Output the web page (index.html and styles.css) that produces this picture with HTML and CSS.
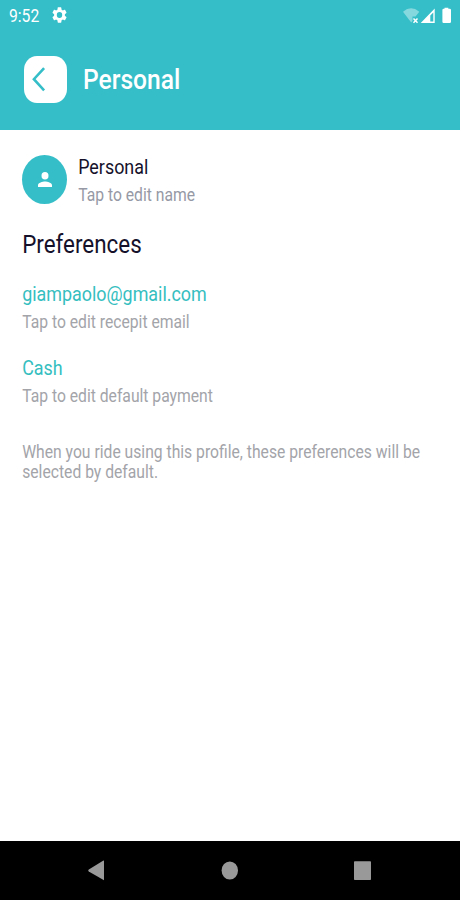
FILE: index.html
```html
<!DOCTYPE html>
<html lang="en">
<head>
<meta charset="utf-8">
<title>Personal</title>
<link rel="stylesheet" href="styles.css">
</head>
<body>
<div class="screen">
  <div class="status">
    <span class="time text">9:52</span>
    <svg class="gear" viewBox="2 2 20 20" preserveAspectRatio="none"><path fill="#fff" d="M19.14 12.94c.04-.3.06-.61.06-.94 0-.32-.02-.64-.07-.94l2.03-1.58a.49.49 0 0 0 .12-.61l-1.92-3.32a.49.49 0 0 0-.59-.22l-2.39.96c-.5-.38-1.03-.7-1.62-.94l-.36-2.54a.48.48 0 0 0-.48-.41h-3.84c-.24 0-.43.17-.47.41l-.36 2.54c-.59.24-1.13.57-1.62.94l-2.39-.96a.48.48 0 0 0-.59.22L2.74 8.87a.48.48 0 0 0 .12.61l2.03 1.58c-.05.3-.09.63-.09.94s.02.64.07.94l-2.03 1.58a.49.49 0 0 0-.12.61l1.92 3.32c.12.22.37.29.59.22l2.39-.96c.5.38 1.03.7 1.62.94l.36 2.54c.05.24.24.41.48.41h3.84c.24 0 .44-.17.47-.41l.36-2.54c.59-.24 1.13-.56 1.62-.94l2.39.96c.22.08.47 0 .59-.22l1.92-3.32a.48.48 0 0 0-.12-.61zM12 15.6a3.6 3.6 0 1 1 0-7.2 3.6 3.6 0 0 1 0 7.2z"/></svg>
    <svg class="signals" viewBox="0 0 50 20">
      <path fill="#fff" fill-opacity=".4" d="M0 4.700Q8 -2.200 16.300 4.700L12.500 9.500H9.500V14L8.200 15.500Z"/>
      <path stroke="#fff" stroke-width="1.500" d="M10.500 11.500l4 4.200M14.500 11.500l-4 4.200"/>
      <path fill="#fff" fill-rule="evenodd" d="M31.700 1.500V16H17.700ZM30.300 5.500L27.300 8.500V14.600H30.300Z"/>
      <path fill="#fff" d="M41.500 1.800V.8h3.800v1h1.400q1.300 0 1.300 1.300v11.600q0 1.300-1.300 1.300h-6q-1.300 0-1.300-1.300V3.100q0-1.300 1.300-1.300z"/>
    </svg>
  </div>
  <header class="header">
    <div class="back"><svg viewBox="0 0 43 47"><path d="M20.300 12.300L10 23.400L20.300 34.700" fill="none" stroke="#35bec8" stroke-width="2.600"/></svg></div>
    <h1 class="title text">Personal</h1>
  </header>
  <main class="content">
    <div class="profile">
      <div class="avatar"><svg viewBox="4 4 16 16" preserveAspectRatio="none"><path fill="#fff" d="M12 12a4 4 0 1 0 0-8 4 4 0 0 0 0 8zm0 2c-2.670 0-8 1.340-8 4v2h16v-2c0-2.660-5.330-4-8-4z"/></svg></div>
      <div class="names">
        <div class="name text">Personal</div>
        <div class="hint cool text">Tap to edit name</div>
      </div>
    </div>
    <h2 class="section text">Preferences</h2>
    <div class="item">
      <div class="value text">giampaolo@gmail.com</div>
      <div class="hint text">Tap to edit recepit email</div>
    </div>
    <div class="item">
      <div class="value text">Cash</div>
      <div class="hint text">Tap to edit default payment</div>
    </div>
    <p class="note text">When you ride using this profile, these preferences will be<br>selected by default.</p>
  </main>
  <nav class="nav">
    <svg viewBox="0 0 17 21"><path fill="#999" d="M16 .5V20.300L.8 11.400Q-.3 10.400.8 9.500L15 .8Z"/></svg>
    <svg viewBox="0 0 17 21"><ellipse cx="8.800" cy="10.500" rx="8.200" ry="9.100" fill="#999"/></svg>
    <svg viewBox="0 0 17 21"><rect x="0" y="1.200" width="17" height="18.800" rx=".8" fill="#999"/></svg>
  </nav>
</div>
</body>
</html>
```

FILE: styles.css
```css
* { box-sizing: border-box; }
body {
  margin: 0;
  background: #fff;
  font-family: Roboto, "Liberation Sans", sans-serif;
}
svg { display: block; }
.screen {
  width: 460px;
  height: 900px;
  display: flex;
  flex-direction: column;
  overflow: hidden;
}
/* Tall letterforms */
.text {
  transform: scaleY(1.12);
  transform-origin: 0 50%;
  white-space: nowrap;
  margin: 0;
  font-weight: 400;
}
.status {
  height: 31px;
  flex: none;
  display: flex;
  align-items: center;
  padding: 0 7px 0 9px;
  background: #35bec8;
}
.time { width: 43px; font-size: 15.700px; color: #fff; }
.gear { width: 15px; height: 16px; margin-top: -1px; }
.signals { width: 50px; height: 20px; margin: 2px 0 0 auto; }
.header {
  height: 99px;
  flex: none;
  display: flex;
  align-items: center;
  padding: 0 24px 1px 24.400px;
  background: #35bec8;
}
.back {
  width: 42.600px;
  height: 47px;
  margin-top: -1px;
  border-radius: 13px / 14px;
  background: #fff;
}
.title {
  margin: -1px 0 0 16px;
  font-size: 24.600px;
  line-height: 30px;
  font-weight: 500;
  color: #fff;
}
.content { flex: 1; padding: 25px 22px 0 22.200px; }
.profile { display: flex; height: 49px; }
.avatar {
  width: 45px;
  height: 49px;
  border-radius: 50%;
  background: #35bec8;
  display: flex;
  align-items: center;
  justify-content: center;
}
.avatar svg { width: 14px; height: 15px; }
.names { margin-left: 11px; }
.name, .value { font-size: 17.900px; line-height: 24px; }
.name { color: #15112b; }
.value { color: #35bec0; }
.hint { margin-top: 4px; font-size: 15.700px; line-height: 24px; color: #a3a4a9; }
.cool { color: #9699a5; }
.section {
  margin-top: 25px;
  font-size: 22.400px;
  line-height: 30px;
  color: #15112b;
}
.item { height: 51px; margin-top: 23px; }
.note {
  margin-top: 37px;
  font-size: 15.700px;
  line-height: 17.500px;
  color: #a3a4a9;
}
.nav {
  height: 59px;
  flex: none;
  display: flex;
  justify-content: space-between;
  align-items: center;
  padding: 0 89px 0 88px;
  background: #000;
}
.nav svg { width: 17px; height: 21px; }
```
